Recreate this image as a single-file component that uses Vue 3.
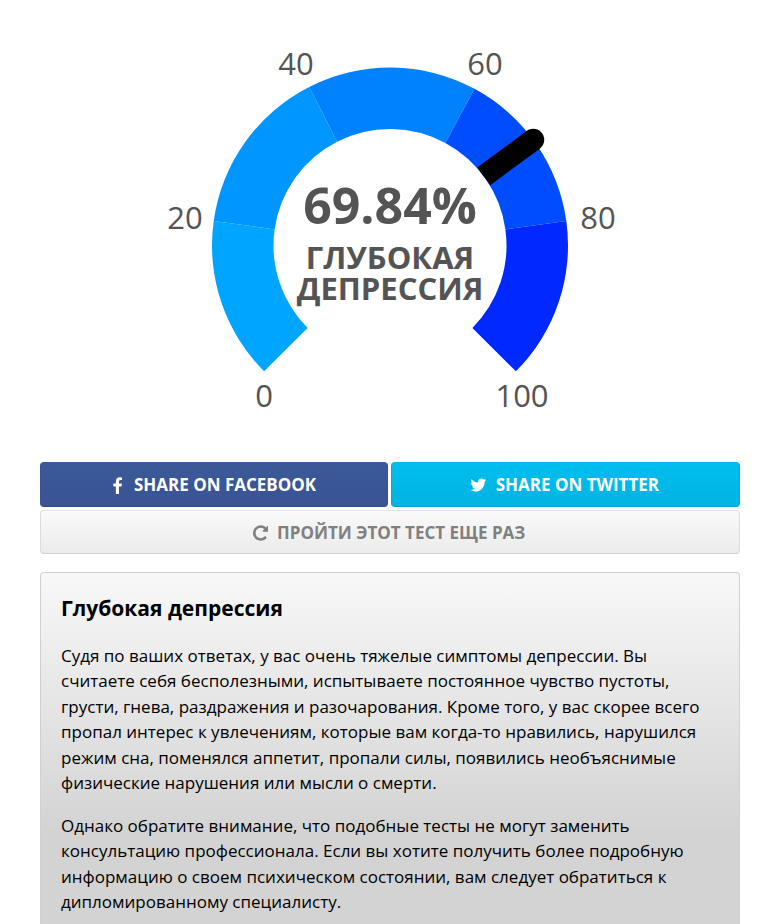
<script setup>
const cx = 350
const cy = 245.5
const outer = 178
const inner = 116.5

const point = (value, radius) => {
  const a = ((value - 50) * 2.7 * Math.PI) / 180
  return [cx + radius * Math.sin(a), cy - radius * Math.cos(a)]
}

const band = (from, to) => {
  const large = (to - from) * 2.7 > 180 ? 1 : 0
  return `M${point(from, outer)} A${outer} ${outer} 0 ${large} 1 ${point(to, outer)} ` +
    `L${point(to, inner)} A${inner} ${inner} 0 ${large} 0 ${point(from, inner)}Z`
}

const bands = [
  { from: 0, to: 19.6, color: '#00a5ff' },
  { from: 19.6, to: 40, color: '#0096ff' },
  { from: 40, to: 60.5, color: '#0082ff' },
  { from: 60.5, to: 80.4, color: '#004dff' },
  { from: 80.4, to: 100, color: '#0028ff' },
]

const labels = [
  { text: '0', x: 224, y: 407 },
  { text: '20', x: 145, y: 229 },
  { text: '40', x: 256, y: 75 },
  { text: '60', x: 445, y: 75 },
  { text: '80', x: 558, y: 229 },
  { text: '100', x: 482, y: 407 },
]

const score = 69.84
const needle = `M${point(score, inner)} L${point(score, outer)}`
const needleCap = point(score, outer)
</script>

<template>
  <main class="page">
    <svg class="gauge" viewBox="0 0 700 422" role="img" aria-label="69.84%">
      <path v-for="b in bands" :key="b.from" :d="band(b.from, b.to)" :fill="b.color" />
      <path :d="needle" stroke="#000" stroke-width="22" />
      <circle :cx="needleCap[0]" :cy="needleCap[1]" r="11" />
      <text v-for="l in labels" :key="l.text" class="tick" :x="l.x" :y="l.y">{{ l.text }}</text>
      <text class="score" x="350" y="224">{{ score }}%</text>
      <text class="verdict">
        <tspan x="350" y="269">ГЛУБОКАЯ</tspan>
        <tspan x="350" y="300">ДЕПРЕССИЯ</tspan>
      </text>
    </svg>

    <div class="actions">
      <a class="btn facebook" href="#facebook">
        <svg class="icon-f" viewBox="0 0 1024 1792" aria-hidden="true">
          <path fill="currentColor" d="M959 140v264h-157q-86 0-116 36t-30 108v189h293l-39 296h-254v759h-306v-759h-255v-296h255v-218q0-186 104-288.500t277-102.500q147 0 228 12z" />
        </svg>
        <span>SHARE ON FACEBOOK</span>
      </a>
      <a class="btn twitter" href="#twitter">
        <svg class="icon" viewBox="0 0 1664 1792" aria-hidden="true">
          <path fill="currentColor" d="M1620 408q-67 98-162 167 1 14 1 42 0 130-38 259.500t-115.500 248.500-184.500 210.500-258 146-323 54.500q-271 0-496-145 35 4 78 4 225 0 401-138-105-2-188-64.500t-114-159.500q33 5 61 5 43 0 85-11-112-23-185.500-111.500t-73.500-205.500v-4q68 38 146 41-66-44-105-115t-39-154q0-88 44-163 121 149 294.500 238.500t371.500 99.500q-8-38-8-74 0-134 94.500-228.500t228.500-94.500q140 0 236 102 109-21 205-78-37 115-142 178 93-10 186-50z" />
        </svg>
        <span>SHARE ON TWITTER</span>
      </a>
      <button class="btn retry" type="button">
        <svg class="icon" viewBox="0 0 1536 1792" aria-hidden="true">
          <path fill="currentColor" d="M1536 256v448q0 26-19 45t-45 19h-448q-42 0-59-40-17-39 14-69l138-138q-148-137-349-137-104 0-198.500 40.500t-163.500 109.500-109.500 163.500-40.500 198.500 40.500 198.500 109.500 163.500 163.500 109.500 198.500 40.500q119 0 225-52t179-147q7-10 23-12 15 0 25 9l137 138q9 8 9.500 20.500t-7.500 22.500q-109 132-264 204.500t-327 72.500q-156 0-298-61t-245-164-164-245-61-298 61-298 164-245 245-164 298-61q147 0 284.500 55.500t244.500 156.500l130-129q29-31 70-14 39 17 39 59z" />
        </svg>
        <span>ПРОЙТИ ЭТОТ ТЕСТ ЕЩЕ РАЗ</span>
      </button>
    </div>

    <section class="result">
      <h2>Глубокая депрессия</h2>
      <p>Судя по ваших ответах, у вас очень тяжелые симптомы депрессии. Вы считаете себя бесполезными, испытываете постоянное чувство пустоты, грусти, гнева, раздражения и разочарования. Кроме того, у вас скорее всего пропал интерес к увлечениям, которые вам когда-то нравились, нарушился режим сна, поменялся аппетит, пропали силы, появились необъяснимые физические нарушения или мысли о смерти.</p>
      <p>Однако обратите внимание, что подобные тесты не могут заменить консультацию профессионала. Если вы хотите получить более подробную информацию о своем психическом состоянии, вам следует обратиться к дипломированному специалисту.</p>
    </section>
  </main>
</template>

<style>
body {
  margin: 0;
  background: #fff;
}
</style>

<style scoped>
.page {
  box-sizing: border-box;
  display: flex;
  flex-direction: column;
  min-height: 100vh;
  padding: 0 40px;
  color: #000;
  font-family: "Open Sans", "Noto Sans", sans-serif;
  font-size: 17px;
  line-height: 1.5;
}

.gauge {
  display: block;
  width: 100%;
  text-anchor: middle;
  fill: #000;
}

.gauge text {
  fill: #545454;
}

.tick {
  font-size: 31px;
}

.score {
  font-size: 50px;
  font-weight: 700;
}

.verdict {
  font-size: 31px;
  font-weight: 700;
}

.actions {
  display: grid;
  grid-template-columns: 348fr 349fr;
  gap: 3px;
  margin-top: 40px;
}

.btn {
  box-sizing: border-box;
  display: flex;
  align-items: center;
  justify-content: center;
  gap: 9px;
  height: 45px;
  padding: 1px 2px 0 0;
  border: 1px solid;
  border-radius: 4px;
  font-family: inherit;
  font-size: 17px;
  font-weight: 700;
  line-height: 24px;
  text-decoration: none;
  cursor: pointer;
}

.facebook {
  border-color: #3a589d #38528f #344c86;
  background: linear-gradient(#3b5998, #3a5394);
  color: #fff;
}

.twitter {
  border-color: #00b8e8 #00aedd #00a3cf;
  background: linear-gradient(#00beee, #00b3e3);
  color: #fff;
}

.retry {
  grid-column: 1 / -1;
  height: 44px;
  padding-top: 2px;
  border-color: #e4e4e4 #dcdcdc #d2d2d2;
  background: linear-gradient(#fafafa, #ebebeb);
  color: #808080;
}

.icon,
.icon-f {
  height: 18px;
}

.icon-f {
  width: 15px;
}

.result {
  flex: 1;
  margin-top: 18px;
  padding: 20px 20px 8px;
  border: 1px solid #d0d0d0;
  border-bottom: 0;
  border-radius: 4px 4px 0 0;
  background: linear-gradient(#f8f8f8, #d3d3d3 260px);
}

.result h2 {
  margin: 0 0 18px;
  font-size: 21px;
}

.result p {
  margin: 0 0 17px;
}

.result p:last-child {
  margin-bottom: 0;
}
</style>
